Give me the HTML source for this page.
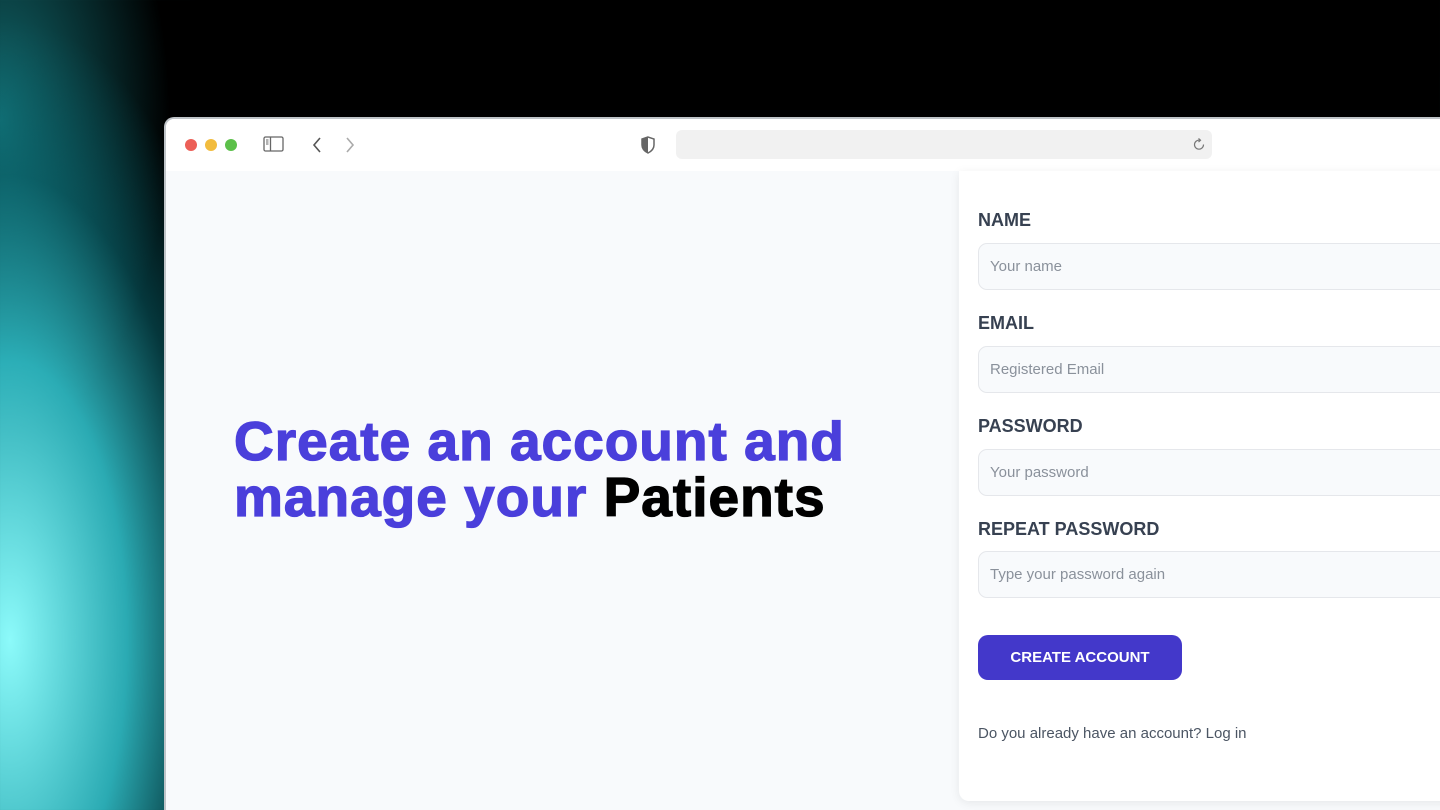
<!DOCTYPE html>
<html style="width:1440px;height:810px;overflow:hidden"><head><style>
*{margin:0;padding:0;box-sizing:border-box}
body{width:1440px;height:810px;overflow:hidden;position:relative;font-family:"Liberation Sans",sans-serif;
background:
radial-gradient(ellipse 260px 620px at 10px 640px,rgba(140,250,250,1),rgba(50,200,210,0.85) 45%,rgba(10,110,120,0.5) 75%,rgba(0,0,0,0) 100%),
radial-gradient(ellipse 170px 320px at 0px 120px,rgba(20,120,125,0.9),rgba(0,0,0,0) 100%),
#000;}
.win{position:absolute;left:164px;top:117px;width:1290px;height:700px;background:#f8fafc;border-radius:10px 0 0 0;border-left:2px solid #bfc4c8;border-top:2px solid #bfc4c8;overflow:hidden}
.bar{height:52px;background:#fff;position:relative}
.dot{position:absolute;top:20px;width:12px;height:12px;border-radius:50%}
.url{position:absolute;left:510px;top:11px;width:536px;height:29px;background:#f1f1f1;border-radius:6px}
h1{position:absolute;left:68px;top:294px;font-size:55px;line-height:56px;font-weight:bold;color:#4a3fdb;letter-spacing:1px;white-space:nowrap;-webkit-text-stroke:1.3px #4a3fdb}
h1 span{color:#000;-webkit-text-stroke:1.3px #000}
.card{position:absolute;left:793px;top:52px;width:520px;height:630px;background:#fff;border-radius:0 0 0 10px;box-shadow:0 2px 10px rgba(0,0,0,0.08)}
.lab{position:absolute;left:19px;font-size:18px;font-weight:bold;color:#374151}
.inp{position:absolute;left:19px;width:480px;height:47px;background:#f8fafc;border:1px solid #e5e7eb;border-radius:9px;font-size:15px;color:#8a919b;padding:14px 0 0 11px}
.btn{position:absolute;left:19px;top:464px;width:204px;height:45px;background:#4338ca;border-radius:10px;color:#fff;font-weight:bold;font-size:15px;text-align:center;line-height:46px}
.foot{position:absolute;left:19px;top:554px;font-size:15px;color:#4b5563}
</style></head><body>
<div class="win">
<div class="bar">
<div class="dot" style="left:19px;background:#ec5f57"></div>
<div class="dot" style="left:39px;background:#f2bc3e"></div>
<div class="dot" style="left:59px;background:#5cc04a"></div>
<svg style="position:absolute;left:97px;top:17px" width="22" height="17" viewBox="0 0 22 17"><rect x="1" y="1" width="19" height="14" rx="1.5" fill="none" stroke="#666" stroke-width="1.3"/><line x1="7.5" y1="1" x2="7.5" y2="15" stroke="#666" stroke-width="1.3"/><path d="M3 4h2.5M3 6h2.5M3 8h2.5" stroke="#666" stroke-width="1"/></svg>
<svg style="position:absolute;left:145px;top:17px" width="12" height="18"><path d="M9 2L3 9l6 7" fill="none" stroke="#555" stroke-width="1.6"/></svg>
<svg style="position:absolute;left:178px;top:17px" width="12" height="18"><path d="M3 2l6 7-6 7" fill="none" stroke="#aaa" stroke-width="1.6"/></svg>
<svg style="position:absolute;left:474px;top:17px" width="16" height="18" viewBox="0 0 16 18"><path d="M8 1L2 3v6c0 4 3 6.5 6 8 3-1.5 6-4 6-8V3z" fill="none" stroke="#666" stroke-width="1.5"/><path d="M8 1L2 3v6c0 4 3 6.5 6 8z" fill="#666"/></svg>
<div class="url"><svg style="position:absolute;right:6px;top:8px" width="13" height="14" viewBox="0 0 13 14"><path d="M10.5 6.5A4.5 4.5 0 1 1 6.5 2.2" fill="none" stroke="#777" stroke-width="1.2"/><path d="M5.5 0.5l2 1.8-2 1.8" fill="none" stroke="#777" stroke-width="1.2"/></svg></div>
</div>
<h1>Create an account and<br>manage your <span>Patients</span></h1>
<div class="card">
<div class="lab" style="top:39px">NAME</div>
<div class="inp" style="top:72px">Your name</div>
<div class="lab" style="top:142px">EMAIL</div>
<div class="inp" style="top:175px">Registered Email</div>
<div class="lab" style="top:245px">PASSWORD</div>
<div class="inp" style="top:278px">Your password</div>
<div class="lab" style="top:348px">REPEAT PASSWORD</div>
<div class="inp" style="top:380px">Type your password again</div>
<div class="btn">CREATE ACCOUNT</div>
<div class="foot">Do you already have an account? Log in</div>
</div>
</div>
</body></html>
